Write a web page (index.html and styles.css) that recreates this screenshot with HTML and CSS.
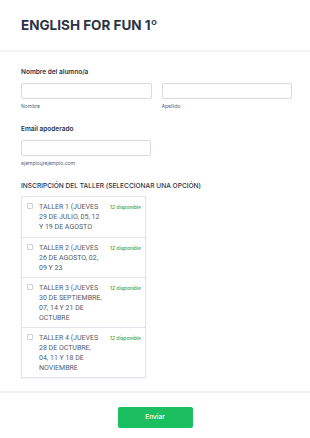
FILE: index.html
```html
<!DOCTYPE html>
<html lang="es">
<head>
    <meta charset="UTF-8">
    <meta name="viewport" content="width=device-width, initial-scale=1.0">
    <title>English for Fun 1º</title>
    <link rel="stylesheet" href="styles.css">
</head>
<body>

    <!-- Encabezado -->
    <div class="encabezado">
        <h1>ENGLISH FOR FUN 1º</h1>
    </div>

    <form class="formulario">
        <!-- Nombre del alumno -->
        <div class="campo">
            <label class="etiqueta">Nombre del alumno/a</label>
            <div class="fila-doble">
                <div class="sub">
                    <input type="text" id="nombre">
                    <span class="ayuda">Nombre</span>
                </div>
                <div class="sub">
                    <input type="text" id="apellido">
                    <span class="ayuda">Apellido</span>
                </div>
            </div>
        </div>

        <!-- Email -->
        <div class="campo">
            <label class="etiqueta" for="correo">Email apoderado</label>
            <div class="sub media">
                <input type="email" id="correo">
                <span class="ayuda">ejemplo@ejemplo.com</span>
            </div>
        </div>

        <!-- Talleres -->
        <div class="campo ultimo">
            <label class="etiqueta titulo-taller">INSCRIPCIÓN DEL TALLER (SELECCIONAR UNA OPCIÓN)</label>
            <div class="talleres">
                <label class="taller">
                    <span class="check"></span>
                    <span class="texto">TALLER 1 (JUEVES 29 DE JULIO, 05, 12 Y 19 DE AGOSTO</span>
                    <span class="cupos">12 disponible</span>
                </label>
                <label class="taller">
                    <span class="check"></span>
                    <span class="texto">TALLER 2 (JUEVES 26 DE AGOSTO, 02, 09 Y 23</span>
                    <span class="cupos">12 disponible</span>
                </label>
                <label class="taller">
                    <span class="check"></span>
                    <span class="texto">TALLER 3 (JUEVES 30 DE SEPTIEMBRE, 07, 14 Y 21 DE OCTUBRE</span>
                    <span class="cupos">12 disponible</span>
                </label>
                <label class="taller">
                    <span class="check"></span>
                    <span class="texto">TALLER 4 (JUEVES 28 DE OCTUBRE, 04, 11 Y 18 DE NOVIEMBRE</span>
                    <span class="cupos">12 disponible</span>
                </label>
            </div>
        </div>
    </form>

    <!-- Botón enviar -->
    <div class="pie">
        <button type="button">Enviar</button>
    </div>

</body>
</html>
```

FILE: styles.css
```css
body {
    font-family: Inter, "Noto Sans", sans-serif;
    background-color: #fff;
    color: #2c3345;
    margin: 0;
}
.encabezado {
    height: 52px;
    padding: 0 21px;
    border-bottom: 2px solid #f3f3f6;
    box-sizing: border-box;
}
h1 {
    margin: 0;
    padding-top: 16.5px;
    font-size: 13.5px;
    line-height: 17px;
    font-weight: 700;
}
.formulario {
    padding: 15px 18px 0 21px;
}
.campo {
    margin-bottom: 14px;
}
.campo.ultimo {
    margin-bottom: 0;
}
.etiqueta {
    display: block;
    font-size: 6.5px;
    line-height: 10px;
    font-weight: 600;
    margin-bottom: 6px;
}
.fila-doble {
    display: flex;
    gap: 10px;
}
.sub {
    display: flex;
    flex-direction: column;
    flex: 1;
    min-width: 0;
}
.media {
    width: 130px;
}
input {
    width: 100%;
    height: 16px;
    border: 1px solid #d7d9e3;
    border-radius: 2px;
    box-sizing: border-box;
    margin: 0;
}
.ayuda {
    font-size: 5px;
    line-height: 7px;
    color: #57647e;
    margin-top: 4px;
}
.titulo-taller {
    font-size: 6.6px;
    font-weight: 500;
    margin-bottom: 5px;
}
.talleres {
    width: 123px;
    border: 1px solid #e3e5ec;
    box-shadow: 0 1px 2px rgba(0, 0, 0, 0.06);
}
.taller {
    display: flex;
    align-items: flex-start;
    padding: 5px 4px 4px 5px;
    border-top: 1px solid #e3e5ec;
}
.taller:first-child {
    border-top: none;
    padding-top: 5px;
    padding-bottom: 5px;
}
.check {
    width: 4px;
    height: 4px;
    border: 1px solid #cdd1dc;
    border-radius: 1px;
    margin-top: 1px;
    flex-shrink: 0;
}
.texto {
    width: 62.9px;
    flex-shrink: 0;
    margin-left: 6px;
    font-family: Roboto, Inter, sans-serif;
    font-size: 7px;
    line-height: 10px;
    color: #555c6b;
}
.cupos {
    margin-left: auto;
    font-size: 5px;
    line-height: 10px;
    font-style: italic;
    font-weight: 500;
    color: #3aa14a;
    white-space: nowrap;
}
.pie {
    border-top: 2px solid #f3f3f6;
    margin-top: 13px;
    padding-top: 10px;
    text-align: center;
}
button {
    width: 75px;
    height: 21px;
    background-color: #1bbf5f;
    color: white;
    border: none;
    border-radius: 2px;
    font-family: Inter, sans-serif;
    font-size: 6.5px;
    font-weight: 500;
    cursor: pointer;
}
```
